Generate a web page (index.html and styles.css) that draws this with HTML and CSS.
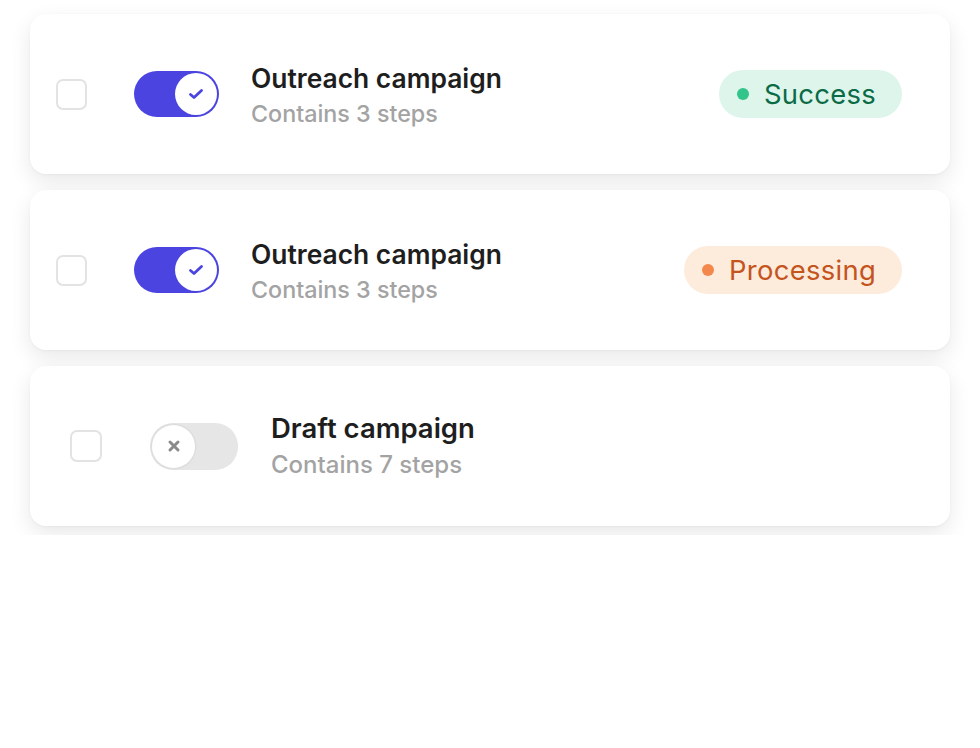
FILE: index.html
```html
<!DOCTYPE html>
<html>
<head>
<meta charset="utf-8">
<link rel="stylesheet" href="styles.css">
</head>
<body>
<div class="stage">
  <div class="list">
    <div class="card">
      <span class="checkbox"></span>
      <span class="toggle on"><span class="knob"><svg width="18" height="18" viewBox="0 0 18 18"><path d="M3.5 9.5 L7 12.5 L14.5 5.5" fill="none" stroke="#4b44e0" stroke-width="2.8" stroke-linecap="round" stroke-linejoin="round"/></svg></span></span>
      <div class="info">
        <div class="title">Outreach campaign</div>
        <div class="sub">Contains 3 steps</div>
      </div>
      <span class="badge success"><span class="dot"></span>Success</span>
    </div>
    <div class="card">
      <span class="checkbox"></span>
      <span class="toggle on"><span class="knob"><svg width="18" height="18" viewBox="0 0 18 18"><path d="M3.5 9.5 L7 12.5 L14.5 5.5" fill="none" stroke="#4b44e0" stroke-width="2.8" stroke-linecap="round" stroke-linejoin="round"/></svg></span></span>
      <div class="info">
        <div class="title">Outreach campaign</div>
        <div class="sub">Contains 3 steps</div>
      </div>
      <span class="badge processing"><span class="dot"></span>Processing</span>
    </div>
    <div class="card draft">
      <span class="checkbox"></span>
      <span class="toggle off"><span class="knob"><svg width="16" height="16" viewBox="0 0 16 16"><path d="M4 4 L12 12 M12 4 L4 12" fill="none" stroke="#8a8a8a" stroke-width="3" stroke-linecap="round"/></svg></span></span>
      <div class="info">
        <div class="title">Draft campaign</div>
        <div class="sub">Contains 7 steps</div>
      </div>
    </div>
  </div>
</div>
</body>
</html>
```

FILE: styles.css
```css
* { box-sizing: border-box; }
html, body { margin: 0; padding: 0; background: #ffffff; }
body { font-family: Inter, "Noto Sans", sans-serif; }

.stage {
  height: 535px;
  overflow: hidden;
  padding: 14px 30px 0 30px;
}

.list {
  display: flex;
  flex-direction: column;
  gap: 16px;
}

.card {
  height: 160px;
  background: #ffffff;
  border-radius: 16px;
  box-shadow: 0 8px 22px rgba(0, 0, 0, 0.09), 0 1px 3px rgba(0, 0, 0, 0.04);
  display: flex;
  align-items: center;
  padding: 0 48px 0 26px;
}

.checkbox {
  width: 31px;
  height: 31px;
  border: 2px solid #e3e3e3;
  border-radius: 7px;
  flex: none;
}

.toggle {
  width: 85px;
  height: 46px;
  border-radius: 23px;
  margin-left: 47px;
  flex: none;
  display: flex;
  align-items: center;
  padding: 0 2px;
}

.toggle.on {
  background: #4b44e0;
  justify-content: flex-end;
}

.toggle .knob {
  width: 42px;
  height: 42px;
  border-radius: 50%;
  background: #ffffff;
  display: flex;
  align-items: center;
  justify-content: center;
}

.toggle.on .knob {
  box-shadow: 0 0 0 1px #4b44e0;
}

.info {
  margin-left: 32px;
  display: flex;
  flex-direction: column;
  gap: 6px;
  padding-top: 4px;
}

.title {
  font-size: 26.4px;
  line-height: 30px;
  font-weight: 600;
  color: #1e1e1e;
}

.sub {
  font-size: 23.3px;
  line-height: 30px;
  font-weight: 500;
  color: #a3a3a3;
}

.badge {
  margin-left: auto;
  height: 48px;
  border-radius: 24px;
  display: flex;
  align-items: center;
  padding: 0 26px 0 18px;
  font-size: 27.4px;
  font-weight: 400;
  letter-spacing: 0.3px;
}

.badge .dot {
  width: 12px;
  height: 12px;
  border-radius: 50%;
  margin-right: 15px;
}

.badge.success { background: #ddf5eb; color: #0b6b47; }
.badge.success .dot { background: #33c48b; }

.badge.processing { background: #fdebdc; color: #c4541c; }
.badge.processing .dot { background: #f4874b; }

.card.draft { padding-left: 40px; }
.card.draft .checkbox { width: 32px; height: 32px; }
.card.draft .toggle { width: 88px; height: 47px; margin-left: 48px; padding: 0 2px; }
.card.draft .info { margin-left: 33px; gap: 7px; padding-top: 0; }
.card.draft .title { font-size: 27.5px; }
.card.draft .sub { font-size: 24px; }

.toggle.off {
  background: #e6e6e6;
  justify-content: flex-start;
}

.toggle.off .knob {
  width: 43px;
  height: 43px;
  box-shadow: 0 0 0 1.5px #dddddd;
}
```
